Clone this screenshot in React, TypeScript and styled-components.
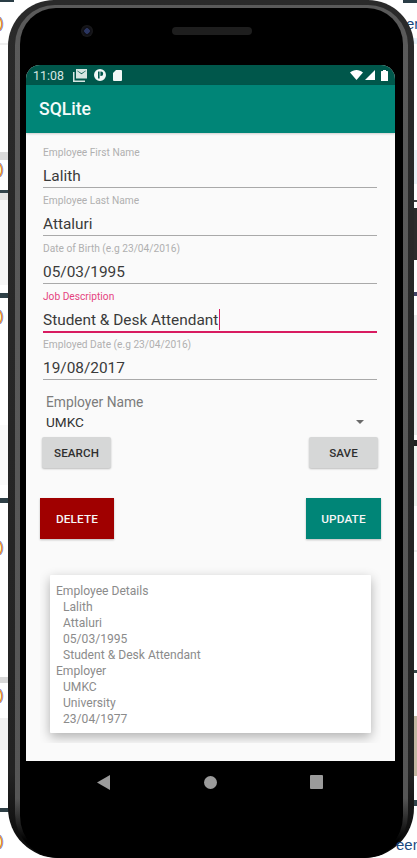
import React from "react";
import styled, { createGlobalStyle } from "styled-components";

const Global = createGlobalStyle`
  html, body { margin: 0; padding: 0; background: #fff; }
  body { font-family: Roboto, "Liberation Sans", sans-serif; }
`;

const Page = styled.div`
  position: relative;
  width: 417px;
  height: 858px;
  overflow: hidden;
  background: #fff;
`;

const Band = styled.div<{ $top: number; $height: number; $color: string; $right?: boolean }>`
  position: absolute;
  top: ${(p) => p.$top}px;
  height: ${(p) => p.$height}px;
  width: 14px;
  ${(p) => (p.$right ? "right: 0;" : "left: 0;")}
  background: ${(p) => p.$color};
`;

const Paren = styled.span<{ $top: number }>`
  position: absolute;
  left: -4px;
  top: ${(p) => p.$top}px;
  font: 15px/16px "Liberation Mono", monospace;
  color: #e8901c;
  text-shadow: 0.6px 0 0 #3a6fc0;
`;

const Tail = styled.span<{ $top: number; $left: number }>`
  position: absolute;
  left: ${(p) => p.$left}px;
  top: ${(p) => p.$top}px;
  font: 15px/16px "Liberation Sans", sans-serif;
  color: #1c4a80;
`;

const Shell = styled.div`
  position: absolute;
  left: 8px;
  top: 0;
  width: 406px;
  height: 858px;
  box-sizing: border-box;
  background: linear-gradient(#2a2a2a 0, #232323 90%, #0c0c0c 98%);
  border-radius: 46px 46px 50px 50px;
  padding: 5px 6px 0 7px;
`;

const Rim = styled.div`
  height: 100%;
  box-sizing: border-box;
  background: linear-gradient(#5a5a5a 0, #555 93%, #000 98%);
  border-radius: 40px 40px 44px 44px;
  padding: 3px 5px 0 5px;
`;

const Bezel = styled.div`
  height: 100%;
  box-sizing: border-box;
  background: #000;
  border-radius: 36px 36px 42px 42px;
  padding: 0 8px 0 6px;
  display: flex;
  flex-direction: column;
`;

const TopBar = styled.div`
  height: 57px;
  flex: none;
  box-sizing: border-box;
  padding: 15px 0 0 55px;
  display: flex;
  align-items: flex-start;
  gap: 79px;
`;

const Camera = styled.div`
  width: 12px;
  height: 12px;
  margin-top: 2px;
  border-radius: 50%;
  background: radial-gradient(circle, #2a3560 0 2.5px, #0d0d14 3px, #1a1a1c 6px);
`;

const Speaker = styled.div`
  width: 80px;
  height: 8px;
  margin-top: 4px;
  border-radius: 4px;
  background: #1e1e1e;
`;

const Screen = styled.div`
  flex: none;
  width: 369px;
  height: 696px;
  display: flex;
  flex-direction: column;
  background: #fafafa;
  border-radius: 14px 14px 0 0;
  overflow: hidden;
`;

const StatusBar = styled.div`
  flex: none;
  height: 20px;
  box-sizing: border-box;
  padding: 0 7px;
  background: #00574b;
  display: flex;
  align-items: center;
  color: #d6e6e2;
`;

const Time = styled.span`
  font-size: 12.4px;
  margin-right: 9px;
`;

const StatusIcons = styled.div`
  display: flex;
  align-items: center;
  gap: 7px;
`;

const SystemIcons = styled.div`
  display: flex;
  align-items: center;
  gap: 2px;
  & > svg:last-child {
    margin-left: 4px;
  }
`;

const Spacer = styled.div`
  flex: 1;
`;

const AppBar = styled.header`
  flex: none;
  height: 48px;
  box-sizing: border-box;
  padding: 0 13px;
  display: flex;
  align-items: center;
  background: #008577;
  color: #f4fbfa;
  font-size: 17.6px;
  font-weight: 500;
  box-shadow: 0 1px 2px rgba(0, 0, 0, 0.18);
  position: relative;
`;

const Form = styled.main`
  flex: 1;
  padding: 12px 18px 0 17px;
  display: flex;
  flex-direction: column;
`;

const Field = styled.div`
  height: 48px;
  display: flex;
  flex-direction: column;
  flex: none;
`;

const Label = styled.div<{ $focus?: boolean }>`
  font-size: 10.2px;
  line-height: 16px;
  color: ${(p) => (p.$focus ? "#e5437f" : "#b0b0b0")};
`;

const Value = styled.div`
  margin-top: 5px;
  height: 21px;
  font-size: 15.4px;
  line-height: 20px;
  color: #3a3a3a;
  display: flex;
`;

const Underline = styled.div<{ $focus?: boolean }>`
  height: ${(p) => (p.$focus ? 1.6 : 1.2)}px;
  background: ${(p) => (p.$focus ? "#d81b60" : "#a9a9a9")};
`;

const Caret = styled.span`
  width: 1.5px;
  height: 21px;
  margin-top: -1px;
  margin-left: 0.5px;
  background: #d81b60;
`;

const Employer = styled.div`
  margin-top: 7px;
  padding-left: 3px;
  display: flex;
  flex-direction: column;
`;

const EmployerLabel = styled.div`
  font-size: 13.8px;
  line-height: 20px;
  color: #7c7c7c;
`;

const EmployerRow = styled.div`
  height: 20px;
  display: flex;
  align-items: center;
  justify-content: space-between;
  font-size: 13.6px;
  color: #333;
  padding-right: 13px;
`;

const Arrow = styled.div`
  width: 0;
  height: 0;
  border-left: 4px solid transparent;
  border-right: 4px solid transparent;
  border-top: 4px solid #6a6a6a;
`;

const ButtonRow = styled.div<{ $outset?: boolean; $gap: number }>`
  display: flex;
  justify-content: space-between;
  margin-top: ${(p) => p.$gap}px;
  margin-left: ${(p) => (p.$outset ? -3 : -1)}px;
  margin-right: ${(p) => (p.$outset ? -4 : -1)}px;
`;

const Button = styled.div<{ $kind: "plain" | "red" | "teal" }>`
  display: flex;
  align-items: center;
  justify-content: center;
  font-size: ${(p) => (p.$kind === "plain" ? 11.6 : 11.8)}px;
  font-weight: 500;
  letter-spacing: 0.1px;
  border-radius: ${(p) => (p.$kind === "plain" ? 2 : 0)}px;
  box-shadow: 0 1px 2px rgba(0, 0, 0, 0.25);
  width: ${(p) => (p.$kind === "plain" ? 69 : p.$kind === "red" ? 74 : 75)}px;
  height: ${(p) => (p.$kind === "plain" ? 31 : 41)}px;
  color: ${(p) => (p.$kind === "plain" ? "#2f2f2f" : "#f6f6f6")};
  background: ${(p) => (p.$kind === "plain" ? "#d6d7d7" : p.$kind === "red" ? "#a00000" : "#008577")};
`;

const CardWell = styled.div`
  margin: 26px -4px 0 -3px;
  padding: 10px 10px 10px;
  align-self: stretch;
  overflow: hidden;
`;

const Card = styled.section`
  box-sizing: border-box;
  height: 158px;
  padding: 8px 6px 0;
  background: #fff;
  border-radius: 1px;
  box-shadow: 0 4px 12px rgba(0, 0, 0, 0.3);
  font-size: 12.1px;
  line-height: 16px;
  color: #8b8b8b;
`;

const Line = styled.div<{ $indent?: boolean }>`
  padding-left: ${(p) => (p.$indent ? 7 : 0)}px;
  white-space: nowrap;
`;

const NavBar = styled.nav`
  flex: none;
  height: 42px;
  box-sizing: border-box;
  padding: 0 0 0 71px;
  display: flex;
  align-items: center;
`;

const NavSlot = styled.div`
  flex: none;
  width: 106.5px;
  display: flex;
  align-items: center;
`;

const NavIcon = styled.svg`
  display: block;
  fill: #9b9b9b;
`;

const bands: [number, number, string, boolean?][] = [
  [0, 2, "#2a3d46"],
  [43, 2, "#efefef"],
  [152, 8, "#dcdcdc"],
  [190, 3, "#33454c"],
  [193, 7, "#e4e4e4"],
  [200, 85, "#f6f6f6"],
  [293, 5, "#2f4047"],
  [425, 60, "#fafafa"],
  [498, 5, "#2f4047"],
  [677, 6, "#d8d8d8"],
  [718, 32, "#f1f1f1"],
  [808, 4, "#2f4047"],
  [0, 3, "#2a3d46", true],
  [38, 6, "#e6f0f8", true],
  [150, 34, "#eaf0f6", true],
  [200, 2, "#444", true],
  [208, 52, "#2b2b2b", true],
  [292, 4, "#446", true],
  [315, 120, "#ededed", true],
  [440, 6, "#222", true],
  [446, 60, "#eef2ee", true],
  [550, 2, "#eee", true],
  [670, 3, "#3a4a4a", true],
  [716, 60, "#c4b7a2", true],
  [800, 6, "#33454c", true],
];

const Photos = () => (
  <svg width="14" height="13" viewBox="0 0 14 13" fill="currentColor">
    <path d="M3 0h11v9.5H3zM4.2 1.4v.6l4.3 3.2L12.8 2v-.6L8.5 4.2z" fillRule="evenodd" />
    <path d="M0 3h1.5v8.5H12V13H0z" />
  </svg>
);

const RoundP = () => (
  <svg width="12" height="12" viewBox="0 0 12 12" fill="#f2f7f6">
    <path
      d="M6 0a6 6 0 1 0 0 12A6 6 0 0 0 6 0zM4 2.6h1.6v6.8H4zM6.4 2.6h.6a2.2 2.2 0 0 1 0 4.4h-.6z"
      fillRule="evenodd"
    />
  </svg>
);

const SdCard = () => (
  <svg width="9" height="11" viewBox="0 0 9 11" fill="#f2f7f6">
    <path d="M3 0h5a1 1 0 0 1 1 1v9a1 1 0 0 1-1 1H1a1 1 0 0 1-1-1V3z" />
  </svg>
);

const Wifi = () => (
  <svg width="13" height="10" viewBox="0 0 13 10" fill="#fff">
    <path d="M0 2.6C3.6-.8 9.4-.8 13 2.6L6.5 10z" />
  </svg>
);

const Signal = () => (
  <svg width="10" height="10" viewBox="0 0 10 10" fill="#fff">
    <path d="M10 0v10H0z" />
  </svg>
);

const Battery = () => (
  <svg width="7" height="11" viewBox="0 0 7 11" fill="#fff">
    <path d="M2 0h3v1h1.4a.6.6 0 0 1 .6.6V11H0V1.6A.6.6 0 0 1 .6 1H2z" />
  </svg>
);

const fields = [
  ["Employee First Name", "Lalith"],
  ["Employee Last Name", "Attaluri"],
  ["Date of Birth (e.g 23/04/2016)", "05/03/1995"],
  ["Job Description", "Student & Desk Attendant"],
  ["Employed Date (e.g 23/04/2016)", "19/08/2017"],
];

const details: [string, boolean][] = [
  ["Employee Details", false],
  ["Lalith", true],
  ["Attaluri", true],
  ["05/03/1995", true],
  ["Student & Desk Attendant", true],
  ["Employer", false],
  ["UMKC", true],
  ["University", true],
  ["23/04/1977", true],
];

export default function App() {
  return (
    <Page>
      <Global />
      {bands.map(([t, h, c, r], i) => (
        <Band key={i} $top={t} $height={h} $color={c} $right={r} />
      ))}
      {[17, 163, 310, 541, 689, 835].map((t) => (
        <Paren key={t} $top={t}>
          )
        </Paren>
      ))}
      <Tail $top={16} $left={406}>en</Tail>
      <Shell>
        <Rim>
          <Bezel>
            <TopBar>
              <Camera />
              <Speaker />
            </TopBar>
            <Screen>
              <StatusBar>
                <Time>11:08</Time>
                <StatusIcons>
                  <Photos />
                  <RoundP />
                  <SdCard />
                </StatusIcons>
                <Spacer />
                <SystemIcons>
                  <Wifi />
                  <Signal />
                  <Battery />
                </SystemIcons>
              </StatusBar>
              <AppBar>SQLite</AppBar>
              <Form>
                {fields.map(([l, v], i) => (
                  <Field key={l}>
                    <Label $focus={i === 3}>{l}</Label>
                    <Value>
                      {v}
                      {i === 3 && <Caret />}
                    </Value>
                    <Underline $focus={i === 3} />
                  </Field>
                ))}
                <Employer>
                  <EmployerLabel>Employer Name</EmployerLabel>
                  <EmployerRow>
                    UMKC
                    <Arrow />
                  </EmployerRow>
                </Employer>
                <ButtonRow $gap={5}>
                  <Button $kind="plain">SEARCH</Button>
                  <Button $kind="plain">SAVE</Button>
                </ButtonRow>
                <ButtonRow $gap={30} $outset>
                  <Button $kind="red">DELETE</Button>
                  <Button $kind="teal">UPDATE</Button>
                </ButtonRow>
                <CardWell>
                  <Card>
                    {details.map(([t, ind], i) => (
                      <Line key={i} $indent={ind}>
                        {t}
                      </Line>
                    ))}
                  </Card>
                </CardWell>
              </Form>
            </Screen>
            <NavBar>
              <NavSlot>
                <NavIcon width="13" height="15" viewBox="0 0 13 15">
                  <path d="M13 0v15L0 7.5z" />
                </NavIcon>
              </NavSlot>
              <NavSlot>
                <NavIcon width="13" height="13" viewBox="0 0 13 13">
                  <circle cx="6.5" cy="6.5" r="6.5" />
                </NavIcon>
              </NavSlot>
              <NavSlot>
                <NavIcon width="13" height="14" viewBox="0 0 13 14">
                  <rect width="13" height="14" rx="1" />
                </NavIcon>
              </NavSlot>
            </NavBar>
          </Bezel>
        </Rim>
      </Shell>
      <Tail $top={837} $left={396}>een</Tail>
    </Page>
  );
}
